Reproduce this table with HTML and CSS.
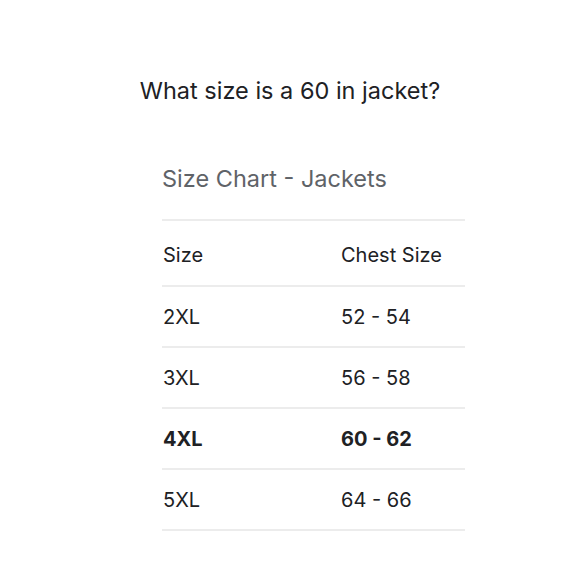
FILE: index.html
```html
<!DOCTYPE html>
<html>
<head>
<meta charset="utf-8">
<link rel="stylesheet" href="styles.css">
</head>
<body>
<main class="page">
  <h1 class="question">What size is a 60 in jacket?</h1>
  <section class="chart">
    <h2 class="chart-title">Size Chart - Jackets</h2>
    <div class="table">
      <div class="row head"><span class="c1">Size</span><span class="c2">Chest Size</span></div>
      <div class="row"><span class="c1">2XL</span><span class="c2">52 - 54</span></div>
      <div class="row"><span class="c1">3XL</span><span class="c2">56 - 58</span></div>
      <div class="row bold"><span class="c1">4XL</span><span class="c2">60 - 62</span></div>
      <div class="row"><span class="c1">5XL</span><span class="c2">64 - 66</span></div>
    </div>
  </section>
</main>
</body>
</html>
```
FILE: styles.css
```css
html, body {
  margin: 0;
  padding: 0;
  background: #fff;
}
body {
  font-family: Inter, Roboto, sans-serif;
  color: #202124;
}
.page {
  width: 580px;
  height: 580px;
  padding-top: 75px;
  box-sizing: border-box;
}
.question {
  margin: 0;
  text-align: center;
  font-size: 23.5px;
  font-weight: 400;
  line-height: 32px;
}
.chart {
  margin: 57px 0 0 162px;
  width: 303px;
}
.chart-title {
  margin: 0;
  font-size: 23.5px;
  font-weight: 400;
  color: #5f6368;
  line-height: 30px;
  padding-bottom: 25px;
  border-bottom: 2px solid #ececec;
}
.row {
  display: flex;
  height: 59px;
  align-items: center;
  border-bottom: 2px solid #ececec;
  font-size: 20px;
}
.row.head {
  box-sizing: border-box;
  height: 66px;
  padding-top: 3px;
}
.c1 {
  width: 178px;
  padding-left: 1px;
}
.bold {
  font-weight: 700;
}
```
